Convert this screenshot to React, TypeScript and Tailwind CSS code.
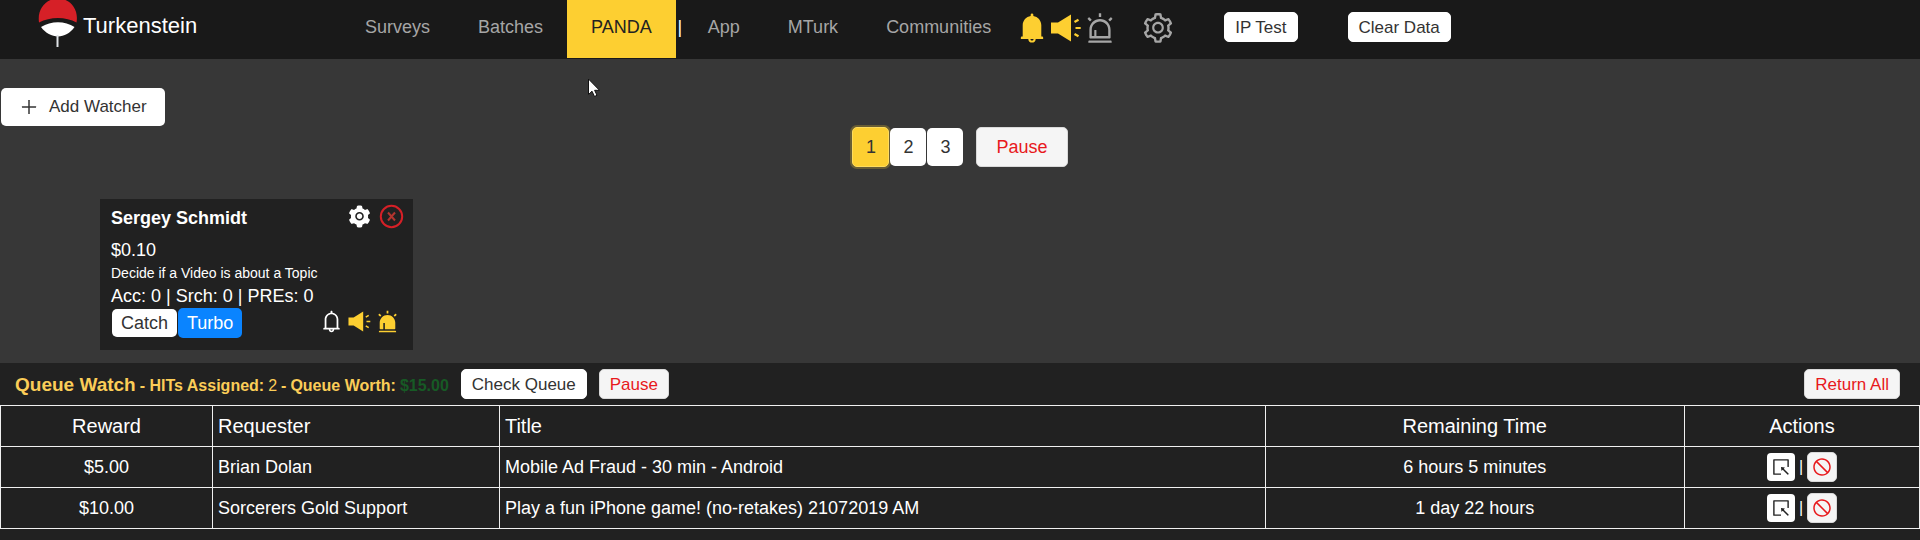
import type { ReactNode } from 'react';
import {
  AiFillAlert,
  AiFillBell,
  AiFillSetting,
  AiOutlineAlert,
  AiOutlineBell,
  AiOutlinePlus,
  AiOutlineSelect,
  AiOutlineSetting,
  AiOutlineStop,
} from 'react-icons/ai';

type QueueItem = { reward: string; requester: string; title: string; remaining: string };

const queue: QueueItem[] = [
  { reward: '$5.00', requester: 'Brian Dolan', title: 'Mobile Ad Fraud - 30 min - Android', remaining: '6 hours 5 minutes' },
  { reward: '$10.00', requester: 'Sorcerers Gold Support', title: 'Play a fun iPhone game! (no-retakes) 21072019 AM', remaining: '1 day 22 hours' },
];

function Logo() {
  return (
    <svg viewBox="0 0 40 48" className="h-12 w-10" aria-hidden="true">
      <path d="M1 22.5C-1 9 8 -1.5 20 -1.5S41 9 38.5 22.5C28 16.5 12 16.5 1 22.5Z" fill="#d62027" />
      <path d="M3 27C13 20.500 27 20.500 36.500 27C28 39.500 12 39.500 3 27Z" fill="#fff" />
      <path d="M19.500 35V47" stroke="#dfe3e6" strokeWidth="2" />
    </svg>
  );
}

function SpeakerIcon() {
  return (
    <svg viewBox="0 0 34 34" className="size-[1em]" aria-hidden="true">
      <path d="M2 11.500H9L22 3.500V30.500L9 22.500H2Z" fill="currentColor" />
      <path d="M25.500 11L29.500 8.700M26.500 17H31.700M25.500 23L29.500 25.300" stroke="currentColor" strokeWidth="2.200" />
    </svg>
  );
}

function CloseIcon() {
  return (
    <svg viewBox="0 0 27 27" className="size-[27px]" fill="none" strokeWidth="2" aria-hidden="true">
      <circle cx="13.5" cy="13.5" r="10.7" stroke="#d62027" />
      <path d="M10 9.500L17 17.500M17 9.500L10 17.500" stroke="#b3352f" />
    </svg>
  );
}

function NavLink({ children, active = false }: { children: ReactNode; active?: boolean }) {
  return (
    <a
      href="#"
      className={
        active
          ? 'flex h-[58px] items-center bg-[#fdcf31] px-6 pb-1 text-[#222]'
          : 'flex h-[58px] items-center px-6 pb-1 text-[#a6a6a6]'
      }
    >
      {children}
    </a>
  );
}

function SmallButton({ children, danger = false }: { children: ReactNode; danger?: boolean }) {
  return (
    <button
      type="button"
      className={`flex h-[30px] items-center justify-center rounded-[5px] border px-[10px] text-[17px] leading-none ${
        danger ? 'border-[#d9d9d9] bg-[#f5f5f5] text-[#e8191c]' : 'border-white bg-white text-[#333]'
      }`}
    >
      {children}
    </button>
  );
}

function IconButton({ label, danger = false, children }: { label: string; danger?: boolean; children: ReactNode }) {
  return (
    <button
      type="button"
      aria-label={label}
      className={
        danger
          ? 'flex size-[30px] items-center justify-center rounded-[5px] border border-[#d9d9d9] bg-[#f5f5f5] text-xl text-[#e8191c]'
          : 'flex size-7 items-center justify-center rounded-[4px] bg-white text-xl text-[#222]'
      }
    >
      {children}
    </button>
  );
}

function Header() {
  return (
    <header className="flex h-[59px] bg-[#191919] text-lg">
      <a href="#" className="flex w-[341px] shrink-0 items-start gap-[5px] pl-[38px] text-[22px] text-white">
        <Logo />
        <span className="pt-[9px]">Turkenstein</span>
      </a>
      <nav className="flex shrink-0">
        <NavLink>Surveys</NavLink>
        <NavLink>Batches</NavLink>
        <NavLink active>PANDA</NavLink>
        <span className="flex h-[58px] w-2 items-center justify-center pb-1 text-white">|</span>
        <NavLink>App</NavLink>
        <NavLink>MTurk</NavLink>
        <NavLink>Communities</NavLink>
      </nav>
      <div className="flex h-14 shrink-0 items-center text-[34px] text-[#fdcf31]">
        <button type="button" aria-label="Notifications"><AiFillBell /></button>
        <button type="button" aria-label="Sound"><SpeakerIcon /></button>
        <button type="button" aria-label="Alarm" className="text-[#a6a6a6]"><AiOutlineAlert /></button>
        <button type="button" aria-label="Settings" className="ml-6 text-[#a6a6a6]"><AiOutlineSetting /></button>
      </div>
      <div className="flex h-[54px] shrink-0 items-center gap-[50px] pl-[49px]">
        <SmallButton>IP Test</SmallButton>
        <SmallButton>Clear Data</SmallButton>
      </div>
    </header>
  );
}

function PageButton({ label, active = false }: { label: string; active?: boolean }) {
  return (
    <button
      type="button"
      className={
        active
          ? 'h-10 w-[37px] rounded-[5px] border border-[#ffdc5c] bg-[#fdcf31] text-[#333] shadow-[0_0_0_2px_rgba(253,207,49,0.25)]'
          : 'h-[38px] w-9 rounded-[5px] bg-white text-[#333]'
      }
    >
      {label}
    </button>
  );
}

function WatcherCard() {
  return (
    <article className="ml-[100px] mt-8 h-[151px] w-[313px] bg-[#212121] pl-[11px] pr-2 text-lg text-white">
      <div className="flex h-[38px] items-center">
        <h2 className="flex-1 font-bold">Sergey Schmidt</h2>
        <div className="flex items-center gap-[6px] pb-1">
          <button type="button" aria-label="Watcher settings" className="text-[25px]"><AiFillSetting /></button>
          <button type="button" aria-label="Remove watcher"><CloseIcon /></button>
        </div>
      </div>
      <p className="mt-px h-6 leading-6">$0.10</p>
      <p className="h-[22px] text-sm leading-[22px]">Decide if a Video is about a Topic</p>
      <p className="h-6 leading-6">Acc: 0 | Srch: 0 | PREs: 0</p>
      <div className="flex items-center">
        <div className="flex flex-1 items-center gap-[1px] pl-px">
          <button type="button" className="h-7 rounded-[5px] bg-white px-[9px] text-lg leading-none text-[#333]">Catch</button>
          <button type="button" className="h-[30px] rounded-[5px] bg-[#0a84ff] px-[9px] text-lg leading-none">Turbo</button>
        </div>
        <div className="flex gap-[3px] pb-1 pr-[5px] text-[25px] text-[#fdcf31]">
          <button type="button" aria-label="Watcher notifications" className="text-white"><AiOutlineBell /></button>
          <button type="button" aria-label="Watcher sound"><SpeakerIcon /></button>
          <button type="button" aria-label="Watcher alarm"><AiFillAlert /></button>
        </div>
      </div>
    </article>
  );
}

function QueueWatch() {
  const cell = 'h-[41px] border border-[#f0f0f0] px-[5px] py-0';
  return (
    <section className="mt-[13px] flex-1 bg-[#212121] text-white">
      <div className="flex h-[42px] items-center pl-[15px] pr-5">
        <h2 className="flex items-baseline gap-1 whitespace-pre pt-[2px] text-base font-bold text-[#fbcd58]">
          <span className="text-[19px]">Queue Watch</span>
          <span>- HITs Assigned:</span>
          <span className="font-normal">2</span>
          <span>-</span>
          <span>Queue Worth:</span>
          <span className="text-[#175a25]">$15.00</span>
        </h2>
        <div className="flex flex-1 items-center gap-3 pl-3">
          <SmallButton>Check Queue</SmallButton>
          <SmallButton danger>Pause</SmallButton>
        </div>
        <SmallButton danger>Return All</SmallButton>
      </div>
      <table className="w-full table-fixed border-collapse text-lg">
        <colgroup>
          <col className="w-[11.05%]" />
          <col className="w-[14.95%]" />
          <col className="w-[39.9%]" />
          <col className="w-[21.85%]" />
          <col />
        </colgroup>
        <thead className="text-xl">
          <tr>
            <th className={`${cell} font-normal`}>Reward</th>
            <th className={`${cell} text-left font-normal`}>Requester</th>
            <th className={`${cell} text-left font-normal`}>Title</th>
            <th className={`${cell} font-normal`}>Remaining Time</th>
            <th className={`${cell} font-normal`}>Actions</th>
          </tr>
        </thead>
        <tbody>
          {queue.map((item) => (
            <tr key={item.requester}>
              <td className={`${cell} text-center`}>{item.reward}</td>
              <td className={cell}>{item.requester}</td>
              <td className={cell}>{item.title}</td>
              <td className={`${cell} text-center`}>{item.remaining}</td>
              <td className={cell}>
                <div className="flex items-center justify-center gap-1">
                  <IconButton label="Open HIT"><AiOutlineSelect /></IconButton>
                  <span className="w-1 text-center text-base leading-none">|</span>
                  <IconButton label="Return HIT" danger><AiOutlineStop /></IconButton>
                </div>
              </td>
            </tr>
          ))}
        </tbody>
      </table>
    </section>
  );
}

export default function App() {
  return (
    <div className="relative flex min-h-screen flex-col bg-[#373737] font-['Liberation_Sans',Arial,sans-serif]">
      <Header />
      <main className="flex flex-1 flex-col">
        <button type="button" className="ml-px mt-[29px] flex h-[38px] items-center gap-[10px] self-start rounded-[5px] bg-white px-[18px] text-lg text-[#333]">
          <AiOutlinePlus className="text-xl" />
          <span className="text-[17px]">Add Watcher</span>
        </button>
        <div className="mt-px flex items-center justify-center gap-[1px] text-lg">
          <PageButton label="1" active />
          <PageButton label="2" />
          <PageButton label="3" />
          <button type="button" className="ml-3 h-10 rounded-[5px] border border-[#d9d9d9] bg-[#f5f5f5] px-[19px] text-[#e8191c]">Pause</button>
        </div>
        <WatcherCard />
        <QueueWatch />
      </main>
      <svg viewBox="0 0 12 19" className="pointer-events-none absolute left-[588px] top-[78px] h-[19px] w-3" aria-hidden="true">
        <path d="M.5 1V16.500L4 13.200L6.500 18.500L9 17.300L6.600 12.300H11.500Z" fill="#fff" stroke="#111" />
      </svg>
    </div>
  );
}
